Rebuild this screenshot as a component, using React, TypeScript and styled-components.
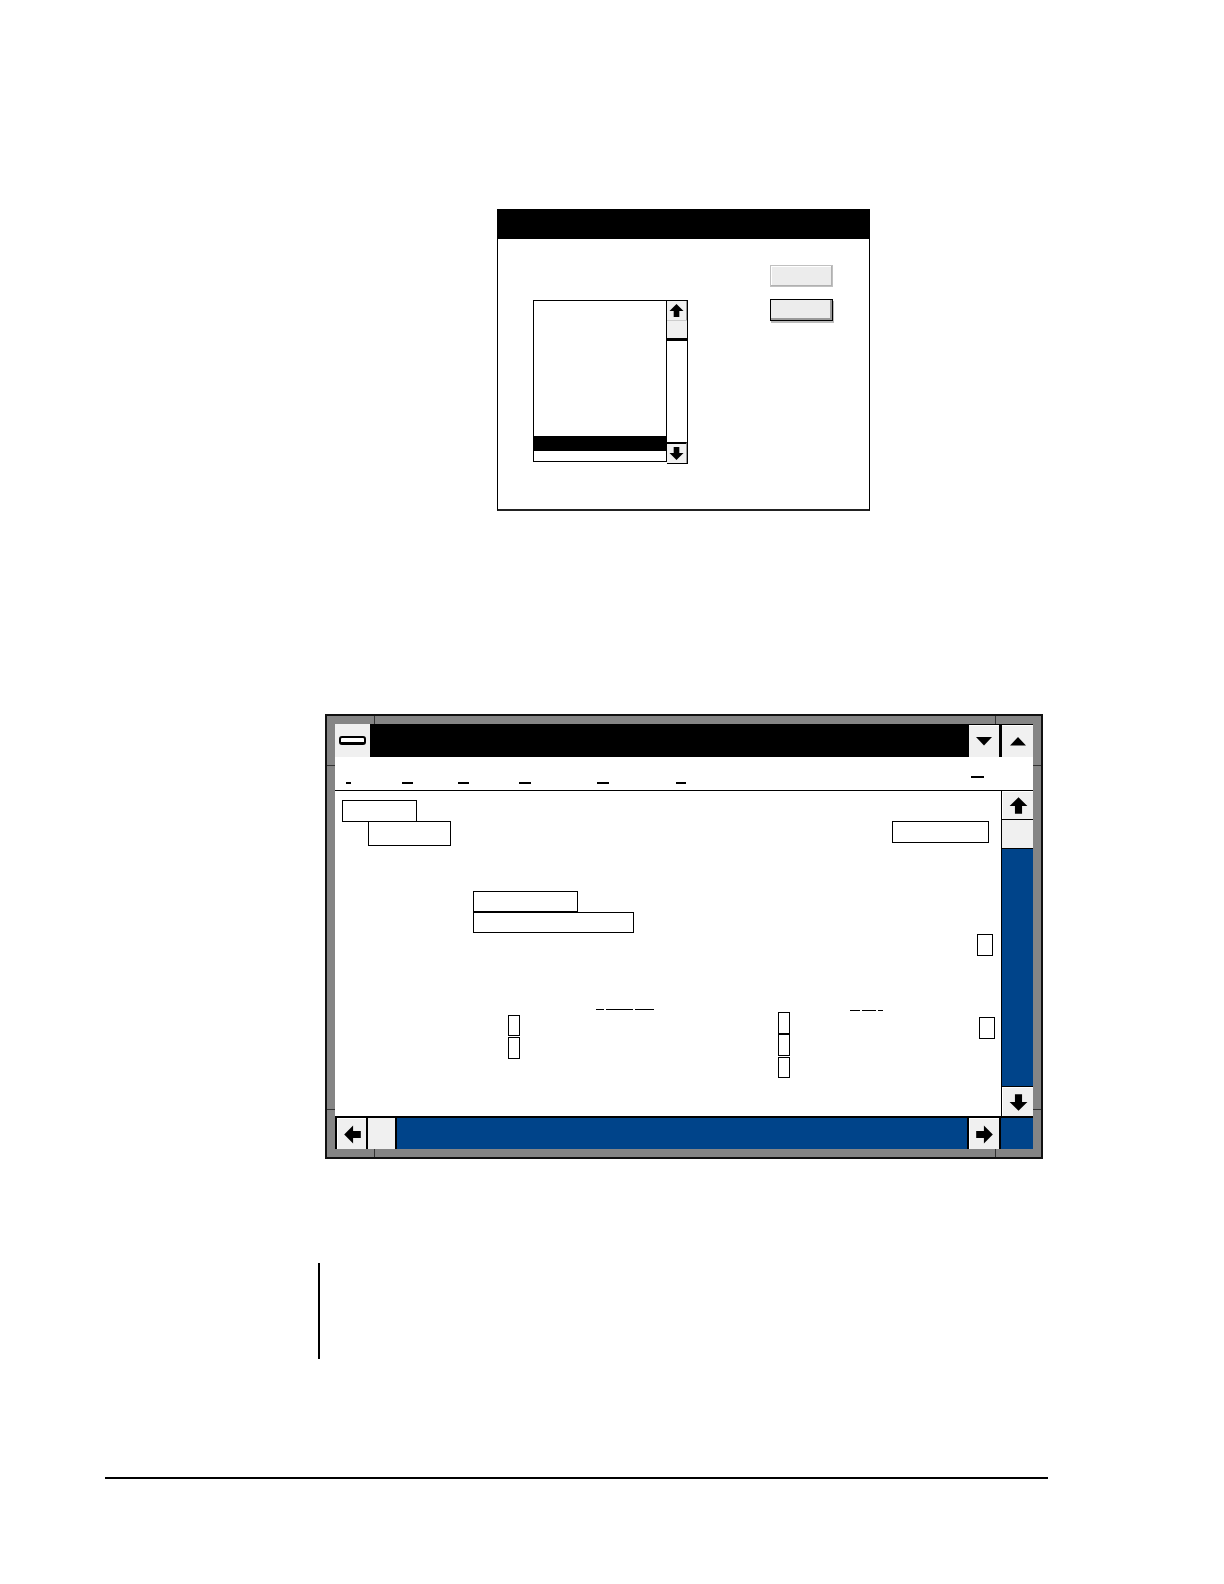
import React from "react";
import styled, { createGlobalStyle } from "styled-components";

const Global = createGlobalStyle`
  html, body { margin: 0; padding: 0; background: #fff; }
  body { font-family: "Liberation Sans", Arial, sans-serif; }
`;

const BLUE = "#00448a";
const FACE = "#f0f0f0";
const FRAME = "#858585";

const Page = styled.div`
  width: 1224px;
  height: 1584px;
  display: flex;
  flex-direction: column;
  align-items: flex-start;
  overflow: hidden;
  background: #fff;
`;

/* ---------- icons ---------- */
type Dir = "up" | "down" | "left" | "right";
const rot: Record<Dir, number> = { up: 0, right: 90, down: 180, left: 270 };

const ArrowSvg = styled.svg<{ $dir: Dir }>`
  display: block;
  transform: rotate(${(p) => rot[p.$dir]}deg);
`;

const Arrow = ({ dir, size }: { dir: Dir; size: number }) => (
  <ArrowSvg $dir={dir} width={size} height={size} viewBox="0 0 16 16">
    <path d="M8 1 L15.5 8.5 L11 8.5 L11 15 L5 15 L5 8.5 L0.5 8.5 Z" fill="#000" />
  </ArrowSvg>
);

const Triangle = ({ dir }: { dir: "up" | "down" }) => (
  <svg width="16" height="9" viewBox="0 0 16 9">
    <polygon points={dir === "down" ? "0,0 16,0 8,8.5" : "0,8.5 16,8.5 8,0"} fill="#000" />
  </svg>
);

/* ---------- dialog ---------- */
const Dialog = styled.section`
  margin: 209px 0 0 497px;
  width: 373px;
  height: 302px;
  box-sizing: border-box;
  border: 1px solid #000;
  border-bottom: 2px solid #222;
  background: #fff;
  display: flex;
  flex-direction: column;
`;

const DialogTitle = styled.div`
  height: 29px;
  flex: none;
  background: #000;
`;

const DialogBody = styled.div`
  display: flex;
  align-items: flex-start;
  padding: 26px 0 0 35px;
`;

const ListBox = styled.div`
  margin-top: 35px;
  display: flex;
  height: 162px;
`;

const ListPane = styled.div`
  width: 134px;
  height: 162px;
  box-sizing: border-box;
  border: 1px solid #000;
  display: flex;
  flex-direction: column;
  justify-content: flex-end;
`;

const SelectedRow = styled.div`
  height: 15px;
  background: #000;
`;

const ListTail = styled.div`
  height: 10px;
`;

const ListScroll = styled.div`
  width: 21px;
  height: 164px;
  box-sizing: border-box;
  border: 1px solid #000;
  border-left: none;
  display: flex;
  flex-direction: column;
  background: #fff;
`;

const SmallArrowBtn = styled.div<{ $bottom?: boolean }>`
  height: ${(p) => (p.$bottom ? 21 : 19)}px;
  flex: none;
  background: ${FACE};
  display: flex;
  align-items: center;
  justify-content: center;
  box-sizing: border-box;
  border-top: ${(p) => (p.$bottom ? "2px solid #000" : "none")};
  border-right: 1px solid #999;
`;

const SmallThumb = styled.div`
  height: 21px;
  flex: none;
  box-sizing: border-box;
  background: ${FACE};
  border-top: 1px solid #ccc;
  border-bottom: 3px solid #000;
`;

const SmallTrack = styled.div`
  flex: 1;
  background: #fff;
`;

const ButtonColumn = styled.div`
  margin-left: 82px;
  display: flex;
  flex-direction: column;
  gap: 12px;
`;

const PushButton = styled.div<{ $default?: boolean }>`
  width: 63px;
  height: 22px;
  box-sizing: border-box;
  background: #ececec;
  border: 1px solid ${(p) => (p.$default ? "#000" : "#c0c0c0")};
  box-shadow: ${(p) =>
    p.$default
      ? "inset -2px -2px 0 #9a9a9a, 1px 2px 0 #bbb"
      : "inset -1px -1px 0 #b0b0b0, inset 1px 1px 0 #fff"};
`;

/* ---------- application window ---------- */
const Window = styled.section`
  position: relative;
  margin: 203px 0 0 325px;
  width: 718px;
  height: 445px;
  box-sizing: border-box;
  border: 2px solid #111;
  padding: 8px;
  background: ${FRAME};
  display: flex;
  flex-direction: column;
`;

const FrameNotch = styled.div<{ $l?: number; $t?: number; $r?: number; $b?: number; $h?: boolean }>`
  position: absolute;
  background: #333;
  ${(p) => (p.$l !== undefined ? `left:${p.$l}px;` : "")}
  ${(p) => (p.$t !== undefined ? `top:${p.$t}px;` : "")}
  ${(p) => (p.$r !== undefined ? `right:${p.$r}px;` : "")}
  ${(p) => (p.$b !== undefined ? `bottom:${p.$b}px;` : "")}
  width: ${(p) => (p.$h ? 8 : 1)}px;
  height: ${(p) => (p.$h ? 1 : 8)}px;
`;

const TitleRow = styled.div`
  height: 33px;
  flex: none;
  display: flex;
  background: #000;
`;

const ControlBox = styled.div`
  width: 35px;
  background: ${FACE};
  display: flex;
  align-items: center;
  justify-content: center;
`;

const BarIcon = styled.div`
  width: 27px;
  height: 9px;
  box-sizing: border-box;
  border: 2px solid #000;
  border-bottom-width: 3px;
  border-radius: 3px;
  background: #fff;
`;

const TitleFill = styled.div`
  flex: 1;
`;

const SysButton = styled.div<{ $w: number; $gap?: number }>`
  width: ${(p) => p.$w}px;
  margin-left: ${(p) => p.$gap ?? 0}px;
  margin-top: 1px;
  box-sizing: border-box;
  background: ${FACE};
  border-top: 1px solid #fff;
  display: flex;
  align-items: center;
  justify-content: center;
`;

const MenuBar = styled.div`
  height: 34px;
  flex: none;
  box-sizing: border-box;
  background: #fff;
  border-bottom: 1px solid #000;
  display: flex;
  align-items: flex-end;
  padding: 0 0 6px 11px;
`;

const MenuItem = styled.div<{ $w?: number; $raise?: number }>`
  width: ${(p) => (p.$w ? `${p.$w}px` : "auto")};
  flex: none;
  margin-bottom: ${(p) => p.$raise ?? 0}px;
  ${(p) => (p.$raise ? "margin-left:auto; margin-right:49px;" : "")}
`;

const Mnemonic = styled.div<{ $w: number }>`
  width: ${(p) => p.$w}px;
  height: 2px;
  background: #000;
`;

const MainRow = styled.div`
  height: 325px;
  flex: none;
  display: flex;
`;

const Client = styled.div`
  position: relative;
  flex: 1;
  background: #fff;
`;

const Field = styled.div<{ $x: number; $y: number; $w: number; $h: number }>`
  position: absolute;
  left: ${(p) => p.$x}px;
  top: ${(p) => p.$y}px;
  width: ${(p) => p.$w}px;
  height: ${(p) => p.$h}px;
  box-sizing: border-box;
  border: 1px solid #000;
  background: #fff;
`;

const DashGroup = styled.div<{ $x: number; $y: number }>`
  position: absolute;
  left: ${(p) => p.$x}px;
  top: ${(p) => p.$y}px;
  display: flex;
  gap: 2px;
`;

const Dash = styled.div<{ $w: number }>`
  width: ${(p) => p.$w}px;
  height: 1px;
  background: #000;
`;

const VScroll = styled.div`
  width: 32px;
  flex: none;
  box-sizing: border-box;
  background: #000;
  padding-left: 1px;
  display: flex;
  flex-direction: column;
  gap: 1px;
`;

const BigArrowBtn = styled.div<{ $w?: number; $h?: number }>`
  ${(p) => (p.$w ? `width:${p.$w}px;` : "")}
  ${(p) => (p.$h ? `height:${p.$h}px;` : "")}
  flex: none;
  box-sizing: border-box;
  background: ${FACE};
  border-top: 1px solid #fff;
  border-left: 1px solid #fff;
  display: flex;
  align-items: center;
  justify-content: center;
`;

const BigThumb = styled.div<{ $w?: number; $h?: number }>`
  ${(p) => (p.$w ? `width:${p.$w}px;` : "")}
  ${(p) => (p.$h ? `height:${p.$h}px;` : "")}
  flex: none;
  background: ${FACE};
`;

const BlueTrack = styled.div`
  flex: 1;
  background: ${BLUE};
`;

const HScrollRow = styled.div`
  height: 33px;
  flex: none;
  display: flex;
`;

const HScroll = styled.div`
  flex: 1;
  box-sizing: border-box;
  background: #000;
  padding: 2px 2px 0 2px;
  display: flex;
  gap: 2px;
`;

const Corner = styled.div`
  width: 32px;
  box-sizing: border-box;
  border-top: 2px solid #000;
  background: ${BLUE};
`;

/* ---------- rules ---------- */
const VRule = styled.div`
  margin: 104px 0 0 318px;
  width: 2px;
  height: 96px;
  background: #000;
`;

const HRule = styled.div`
  margin: 118px 0 0 105px;
  width: 943px;
  height: 2px;
  background: #000;
`;

const menuItems = [
  { w: 56, m: 5 },
  { w: 56, m: 11 },
  { w: 61, m: 11 },
  { w: 78, m: 12 },
  { w: 79, m: 12 },
  { w: 20, m: 10 },
];

const fields = [
  { x: 7, y: 9, w: 75, h: 22 },
  { x: 33, y: 30, w: 83, h: 25 },
  { x: 557, y: 30, w: 97, h: 22 },
  { x: 138, y: 100, w: 105, h: 21 },
  { x: 138, y: 121, w: 161, h: 21 },
  { x: 642, y: 143, w: 16, h: 22 },
  { x: 644, y: 226, w: 16, h: 22 },
  { x: 173, y: 224, w: 12, h: 21 },
  { x: 173, y: 246, w: 12, h: 22 },
  { x: 443, y: 221, w: 12, h: 22 },
  { x: 443, y: 243, w: 12, h: 22 },
  { x: 443, y: 266, w: 12, h: 21 },
];

export default function App() {
  return (
    <Page>
      <Global />
      <Dialog>
        <DialogTitle />
        <DialogBody>
          <ListBox>
            <ListPane>
              <SelectedRow />
              <ListTail />
            </ListPane>
            <ListScroll>
              <SmallArrowBtn>
                <Arrow dir="up" size={15} />
              </SmallArrowBtn>
              <SmallThumb />
              <SmallTrack />
              <SmallArrowBtn $bottom>
                <Arrow dir="down" size={15} />
              </SmallArrowBtn>
            </ListScroll>
          </ListBox>
          <ButtonColumn>
            <PushButton />
            <PushButton $default />
          </ButtonColumn>
        </DialogBody>
      </Dialog>

      <Window>
        <FrameNotch $l={47} $t={0} />
        <FrameNotch $l={668} $t={0} />
        <FrameNotch $l={47} $b={0} />
        <FrameNotch $l={668} $b={0} />
        <FrameNotch $h $l={0} $t={49} />
        <FrameNotch $h $r={0} $t={49} />
        <FrameNotch $h $l={0} $t={393} />
        <FrameNotch $h $r={0} $t={393} />

        <TitleRow>
          <ControlBox>
            <BarIcon />
          </ControlBox>
          <TitleFill />
          <SysButton $w={30}>
            <Triangle dir="down" />
          </SysButton>
          <SysButton $w={31} $gap={3}>
            <Triangle dir="up" />
          </SysButton>
        </TitleRow>

        <MenuBar>
          {menuItems.map((m, i) => (
            <MenuItem key={i} $w={m.w}>
              <Mnemonic $w={m.m} />
            </MenuItem>
          ))}
          <MenuItem $raise={6}>
            <Mnemonic $w={13} />
          </MenuItem>
        </MenuBar>

        <MainRow>
          <Client>
            {fields.map((f, i) => (
              <Field key={i} $x={f.x} $y={f.y} $w={f.w} $h={f.h} />
            ))}
            <DashGroup $x={261} $y={218}>
              <Dash $w={8} />
              <Dash $w={27} />
              <Dash $w={19} />
            </DashGroup>
            <DashGroup $x={515} $y={219}>
              <Dash $w={10} />
              <Dash $w={14} />
              <Dash $w={5} />
            </DashGroup>
          </Client>
          <VScroll>
            <BigArrowBtn $h={28}>
              <Arrow dir="up" size={19} />
            </BigArrowBtn>
            <BigThumb $h={28} />
            <BlueTrack />
            <BigArrowBtn $h={29}>
              <Arrow dir="down" size={19} />
            </BigArrowBtn>
          </VScroll>
        </MainRow>

        <HScrollRow>
          <HScroll>
            <BigArrowBtn $w={29}>
              <Arrow dir="left" size={19} />
            </BigArrowBtn>
            <BigThumb $w={27} />
            <BlueTrack />
            <BigArrowBtn $w={30}>
              <Arrow dir="right" size={19} />
            </BigArrowBtn>
          </HScroll>
          <Corner />
        </HScrollRow>
      </Window>

      <VRule />
      <HRule />
    </Page>
  );
}
